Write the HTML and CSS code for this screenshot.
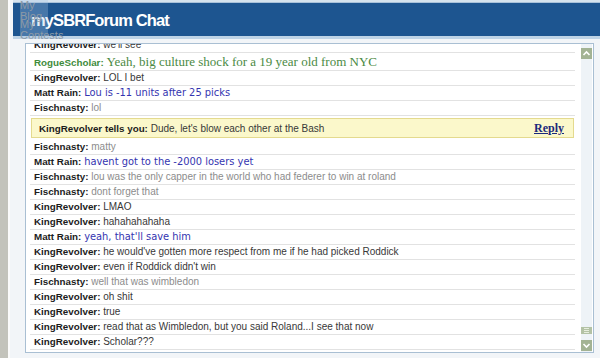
FILE: index.html
```html
<!DOCTYPE html>
<html>
<head>
<meta charset="utf-8">
<title>mySBRForum Chat</title>
<link rel="stylesheet" href="styles.css">
</head>
<body>
<div class="frame">
  <div class="edge"></div>
  <div class="page">
    <div class="topline"></div>
    <header class="header"><h1 class="title">mySBRForum Chat</h1></header>
    <div class="subbar"></div>
    <div class="chatwrap">
      <div class="chatbox">
        <div class="viewport">
          <ul class="rows">
            <li class="row cut"><b class="name">KingRevolver:</b> <span class="msg king">we'll see</span></li>
            <li class="row rogue"><b class="name green">RogueScholar:</b> <span class="msg serif">Yeah, big culture shock for a 19 year old from NYC</span></li>
            <li class="row"><b class="name">KingRevolver:</b> <span class="msg king">LOL I bet</span></li>
            <li class="row"><b class="name">Matt Rain:</b> <span class="msg matt">Lou is -11 units after 25 picks</span></li>
            <li class="row"><b class="name">Fischnasty:</b> <span class="msg fisch">lol</span></li>
            <li class="whisper-row">
              <div class="whisper">
                <span><b class="name">KingRevolver tells you:</b> <span class="msg king">Dude, let's blow each other at the Bash</span></span>
                <a class="reply" href="#">Reply</a>
              </div>
            </li>
            <li class="row"><b class="name">Fischnasty:</b> <span class="msg fisch">matty</span></li>
            <li class="row"><b class="name">Matt Rain:</b> <span class="msg matt">havent got to the -2000 losers yet</span></li>
            <li class="row"><b class="name">Fischnasty:</b> <span class="msg fisch">lou was the only capper in the world who had federer to win at roland</span></li>
            <li class="row"><b class="name">Fischnasty:</b> <span class="msg fisch">dont forget that</span></li>
            <li class="row"><b class="name">KingRevolver:</b> <span class="msg king">LMAO</span></li>
            <li class="row"><b class="name">KingRevolver:</b> <span class="msg king">hahahahahaha</span></li>
            <li class="row"><b class="name">Matt Rain:</b> <span class="msg matt">yeah, that'll save him</span></li>
            <li class="row"><b class="name">KingRevolver:</b> <span class="msg king">he would've gotten more respect from me if he had picked Roddick</span></li>
            <li class="row"><b class="name">KingRevolver:</b> <span class="msg king">even if Roddick didn't win</span></li>
            <li class="row"><b class="name">Fischnasty:</b> <span class="msg fisch">well that was wimbledon</span></li>
            <li class="row"><b class="name">KingRevolver:</b> <span class="msg king">oh shit</span></li>
            <li class="row"><b class="name">KingRevolver:</b> <span class="msg king">true</span></li>
            <li class="row"><b class="name">KingRevolver:</b> <span class="msg king">read that as Wimbledon, but you said Roland...I see that now</span></li>
            <li class="row"><b class="name">KingRevolver:</b> <span class="msg king">Scholar???</span></li>
          </ul>
        </div>
        <div class="scrollbar">
          <div class="sb-btn"><svg width="11" height="11" viewBox="0 0 11 11"><polyline points="2.5,7 5.5,4 8.5,7" fill="none" stroke="#ffffff" stroke-width="1.6"/></svg></div>
          <div class="sb-track"></div>
          <div class="sb-thumb"><span></span><span></span><span></span></div>
          <div class="sb-gap"></div>
          <div class="sb-btn"><svg width="11" height="11" viewBox="0 0 11 11"><polyline points="2.5,4 5.5,7 8.5,4" fill="none" stroke="#ffffff" stroke-width="1.6"/></svg></div>
        </div>
      </div>
    </div>
  </div>
  <nav class="navpop">
    <div class="navitem">My<br>Blog</div>
    <div class="navitem second">My<br>Contests</div>
  </nav>
</div>
</body>
</html>
```

FILE: styles.css
```css
* { box-sizing: border-box; }
html, body { margin: 0; padding: 0; }
body {
  width: 600px;
  height: 358px;
  overflow: hidden;
  background: #f3f6f9;
  font-family: "Liberation Sans", Arial, sans-serif;
}
.frame {
  position: relative;
  display: flex;
  height: 358px;
}
.edge {
  width: 10px;
  flex: none;
  background: #c3c3bb;
  border-right: 2px solid #fbfbfb;
}
.page {
  flex: 1;
  display: flex;
  flex-direction: column;
  padding-left: 3px;
  background: #f2f5f8;
}
.topline {
  height: 3px;
  background: #d6e3ee;
  border-bottom: 1px solid #a9c2da;
}
.header {
  height: 33px;
  background: #1d5590;
  display: flex;
  align-items: center;
}
.title {
  margin: 0 0 0 18px;
  color: #ffffff;
  font-family: "Liberation Sans", Arial, sans-serif;
  font-weight: bold;
  font-size: 16.5px;
  letter-spacing: -0.9px;
  padding-top: 1px;
}
.subbar {
  height: 3px;
  background: #bed3e6;
}
.chatwrap {
  padding: 4px 0 0 12px;
}
.chatbox {
  display: flex;
  width: 569px;
  height: 310px;
  border: 1px solid #a9bfd3;
  background: #ffffff;
}
.viewport {
  flex: 1;
  overflow: hidden;
  padding: 0 3px 0 4px;
}
.rows {
  list-style: none;
  margin: -6px 0 0 0;
  padding: 0;
}
.row {
  height: 15px;
  line-height: 14px;
  border-bottom: 1px solid #e2e2e2;
  padding-left: 4px;
  white-space: nowrap;
  font-size: 10px;
}
.row.rogue {
  height: 18px;
  line-height: 17px;
}
.name {
  font-size: 9.8px;
  font-weight: bold;
  color: #1c1c1c;
}
.name.green { color: #3f8c3c; }
.msg { font-size: 10px; }
.king { color: #383838; }
.fisch { color: #8c8c8c; }
.matt {
  color: #3434b0;
  font-family: "DejaVu Sans", Verdana, sans-serif;
  font-size: 9.9px;
}
.serif {
  font-family: "Liberation Serif", "Times New Roman", serif;
  font-size: 13px;
  color: #4b8a44;
}
.whisper-row {
  height: 24px;
  padding: 2px 1px 2px 1px;
}
.whisper {
  height: 20px;
  display: flex;
  align-items: center;
  justify-content: space-between;
  padding: 0 9px 0 7px;
  background: #fbf8cb;
  border: 1px solid #e4da8e;
  font-size: 10px;
  white-space: nowrap;
}
.reply {
  font-family: "Liberation Serif", "Times New Roman", serif;
  font-weight: bold;
  font-size: 12px;
  color: #1b2a7c;
  text-decoration: underline;
}
.scrollbar {
  width: 11px;
  flex: none;
  margin: 0 1px 0 3px;
  padding: 4px 0 1px 0;
  display: flex;
  flex-direction: column;
  background: #eef3f7;
}
.sb-btn {
  height: 11px;
  width: 11px;
  background: #a3b394;
  display: flex;
}
.sb-track { flex: 1; }
.sb-thumb {
  height: 7px;
  background: #b3c2a5;
  display: flex;
  flex-direction: column;
  justify-content: center;
  gap: 1px;
  padding: 0 3px;
}
.sb-thumb span {
  height: 1px;
  background: #e6eddd;
}
.sb-gap { height: 6px; }
.navpop {
  position: absolute;
  left: 20px;
  top: 0;
  width: 28px;
  height: 38px;
  background: rgba(170, 200, 230, 0.3);
  font-family: "Liberation Sans", Arial, sans-serif;
  font-size: 11px;
  line-height: 11px;
  color: #8e9aa6;
}
.navitem { white-space: nowrap; position: relative; }
.navitem.second { margin-top: -3px; }
```
